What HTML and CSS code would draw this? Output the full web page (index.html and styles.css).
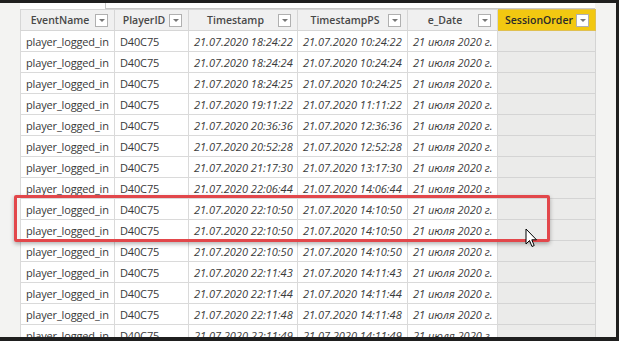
FILE: index.html
```html
<!DOCTYPE html>
<html>
<head>
<meta charset="utf-8">
<link rel="stylesheet" href="styles.css">
</head>
<body>
<div class="screen">
  <div class="app">
    <div class="topstrip"><div class="formula"></div></div>
    <div class="gridwrap">
      <table class="grid">
        <colgroup>
          <col class="c1"><col class="c2"><col class="c3"><col class="c4"><col class="c5"><col class="c6">
        </colgroup>
        <thead>
          <tr>
            <th><div class="hcell"><span class="hlabel">EventName</span><span class="dd"></span></div></th>
            <th><div class="hcell"><span class="hlabel">PlayerID</span><span class="dd"></span></div></th>
            <th><div class="hcell"><span class="hlabel">Timestamp</span><span class="dd"></span></div></th>
            <th><div class="hcell"><span class="hlabel">TimestampPS</span><span class="dd"></span></div></th>
            <th><div class="hcell"><span class="hlabel">e_Date</span><span class="dd"></span></div></th>
            <th class="sel"><div class="hcell"><span class="hlabel">SessionOrder</span><span class="dd"></span></div></th>
          </tr>
        </thead>
        <tbody>
          <tr><td>player_logged_in</td><td>D40C75</td><td class="it">21.07.2020 18:24:22</td><td class="it">21.07.2020 10:24:22</td><td class="it">21 июля 2020 г.</td><td class="empty"></td></tr>
          <tr><td>player_logged_in</td><td>D40C75</td><td class="it">21.07.2020 18:24:24</td><td class="it">21.07.2020 10:24:24</td><td class="it">21 июля 2020 г.</td><td class="empty"></td></tr>
          <tr><td>player_logged_in</td><td>D40C75</td><td class="it">21.07.2020 18:24:25</td><td class="it">21.07.2020 10:24:25</td><td class="it">21 июля 2020 г.</td><td class="empty"></td></tr>
          <tr><td>player_logged_in</td><td>D40C75</td><td class="it">21.07.2020 19:11:22</td><td class="it">21.07.2020 11:11:22</td><td class="it">21 июля 2020 г.</td><td class="empty"></td></tr>
          <tr><td>player_logged_in</td><td>D40C75</td><td class="it">21.07.2020 20:36:36</td><td class="it">21.07.2020 12:36:36</td><td class="it">21 июля 2020 г.</td><td class="empty"></td></tr>
          <tr><td>player_logged_in</td><td>D40C75</td><td class="it">21.07.2020 20:52:28</td><td class="it">21.07.2020 12:52:28</td><td class="it">21 июля 2020 г.</td><td class="empty"></td></tr>
          <tr><td>player_logged_in</td><td>D40C75</td><td class="it">21.07.2020 21:17:30</td><td class="it">21.07.2020 13:17:30</td><td class="it">21 июля 2020 г.</td><td class="empty"></td></tr>
          <tr><td>player_logged_in</td><td>D40C75</td><td class="it">21.07.2020 22:06:44</td><td class="it">21.07.2020 14:06:44</td><td class="it">21 июля 2020 г.</td><td class="empty"></td></tr>
          <tr><td>player_logged_in</td><td>D40C75</td><td class="it">21.07.2020 22:10:50</td><td class="it">21.07.2020 14:10:50</td><td class="it">21 июля 2020 г.</td><td class="empty"></td></tr>
          <tr><td>player_logged_in</td><td>D40C75</td><td class="it">21.07.2020 22:10:50</td><td class="it">21.07.2020 14:10:50</td><td class="it">21 июля 2020 г.</td><td class="empty"></td></tr>
          <tr><td>player_logged_in</td><td>D40C75</td><td class="it">21.07.2020 22:10:50</td><td class="it">21.07.2020 14:10:50</td><td class="it">21 июля 2020 г.</td><td class="empty"></td></tr>
          <tr><td>player_logged_in</td><td>D40C75</td><td class="it">21.07.2020 22:11:43</td><td class="it">21.07.2020 14:11:43</td><td class="it">21 июля 2020 г.</td><td class="empty"></td></tr>
          <tr><td>player_logged_in</td><td>D40C75</td><td class="it">21.07.2020 22:11:44</td><td class="it">21.07.2020 14:11:44</td><td class="it">21 июля 2020 г.</td><td class="empty"></td></tr>
          <tr><td>player_logged_in</td><td>D40C75</td><td class="it">21.07.2020 22:11:48</td><td class="it">21.07.2020 14:11:48</td><td class="it">21 июля 2020 г.</td><td class="empty"></td></tr>
          <tr><td>player_logged_in</td><td>D40C75</td><td class="it">21.07.2020 22:11:49</td><td class="it">21.07.2020 14:11:49</td><td class="it">21 июля 2020 г.</td><td class="empty"></td></tr>
        </tbody>
      </table>
    </div>
    <div class="highlight"></div>
    <svg class="cursor" width="14" height="22" viewBox="0 0 14 22">
      <path d="M1 1 L1 16 L4.5 12.5 L7 18.5 L9.2 17.5 L6.8 11.8 L11.5 11.8 Z" fill="#fff" stroke="#000" stroke-width="1" stroke-linejoin="round"/>
    </svg>
  </div>
</div>
</body>
</html>
```

FILE: styles.css
```css
html, body {
  margin: 0;
  padding: 0;
  background: #1f1f1f;
}
.screen {
  width: 619px;
  height: 341px;
  box-sizing: border-box;
  padding: 3px 3px 4px 0;
  overflow: hidden;
}
.app {
  position: relative;
  height: 334px;
  background: #f3f3f2;
  overflow: hidden;
  font-family: "Open Sans", "Noto Sans", sans-serif;
}
.topstrip {
  margin-left: 20px;
  width: 575px;
  height: 6px;
  background: #fff;
  position: relative;
}
.formula {
  margin-left: 85px;
  height: 5px;
  border-left: 1px solid #c8c8c8;
  border-bottom: 1px solid #c8c8c8;
  background: #fff;
}
.gridwrap {
  margin-left: 20px;
}
.grid {
  border-collapse: collapse;
  table-layout: fixed;
  width: 575px;
  font-size: 11px;
  color: #3a3a3a;
}
.c1 { width: 94px; }
.c2 { width: 74px; }
.c3 { width: 109px; }
.c4 { width: 110px; }
.c5 { width: 90px; }
.c6 { width: 98px; }
.grid th {
  height: 20px;
  padding: 0;
  background: #f0f0f0;
  border: 1px solid #d6d6d6;
  font-weight: 600;
  font-size: 10.5px;
  color: #484848;
}
.grid th.sel {
  background: #f2c811;
  border-color: #e0c050;
  color: #2a2a2a;
}
.hcell {
  display: flex;
  align-items: center;
  padding: 0 6px 0 4px;
}
.hlabel {
  flex: 1;
  text-align: center;
  white-space: nowrap;
}
.dd {
  width: 11px;
  height: 11px;
  border: 1px solid #b0b0b0;
  background: #fff;
  position: relative;
  flex: none;
}
.dd::after {
  content: "";
  position: absolute;
  left: 3px;
  top: 4px;
  border-left: 3px solid transparent;
  border-right: 3px solid transparent;
  border-top: 3px solid #777;
}
.grid td {
  height: 20px;
  padding: 0 0 0 5px;
  border: 1px solid #dadada;
  background: #fff;
  white-space: nowrap;
  overflow: hidden;
  letter-spacing: -0.15px;
}
.grid td.it {
  font-style: italic;
  letter-spacing: 0;
}
.grid td.empty {
  background: #ebebea;
  border-color: #d4d4d4;
}
.highlight {
  position: absolute;
  left: 14px;
  top: 192px;
  width: 530px;
  height: 41px;
  border: 3px solid #e2474b;
  border-radius: 2px;
  box-shadow: 0 2px 4px rgba(0,0,0,0.3);
}
.cursor {
  position: absolute;
  left: 525px;
  top: 225px;
}
```
